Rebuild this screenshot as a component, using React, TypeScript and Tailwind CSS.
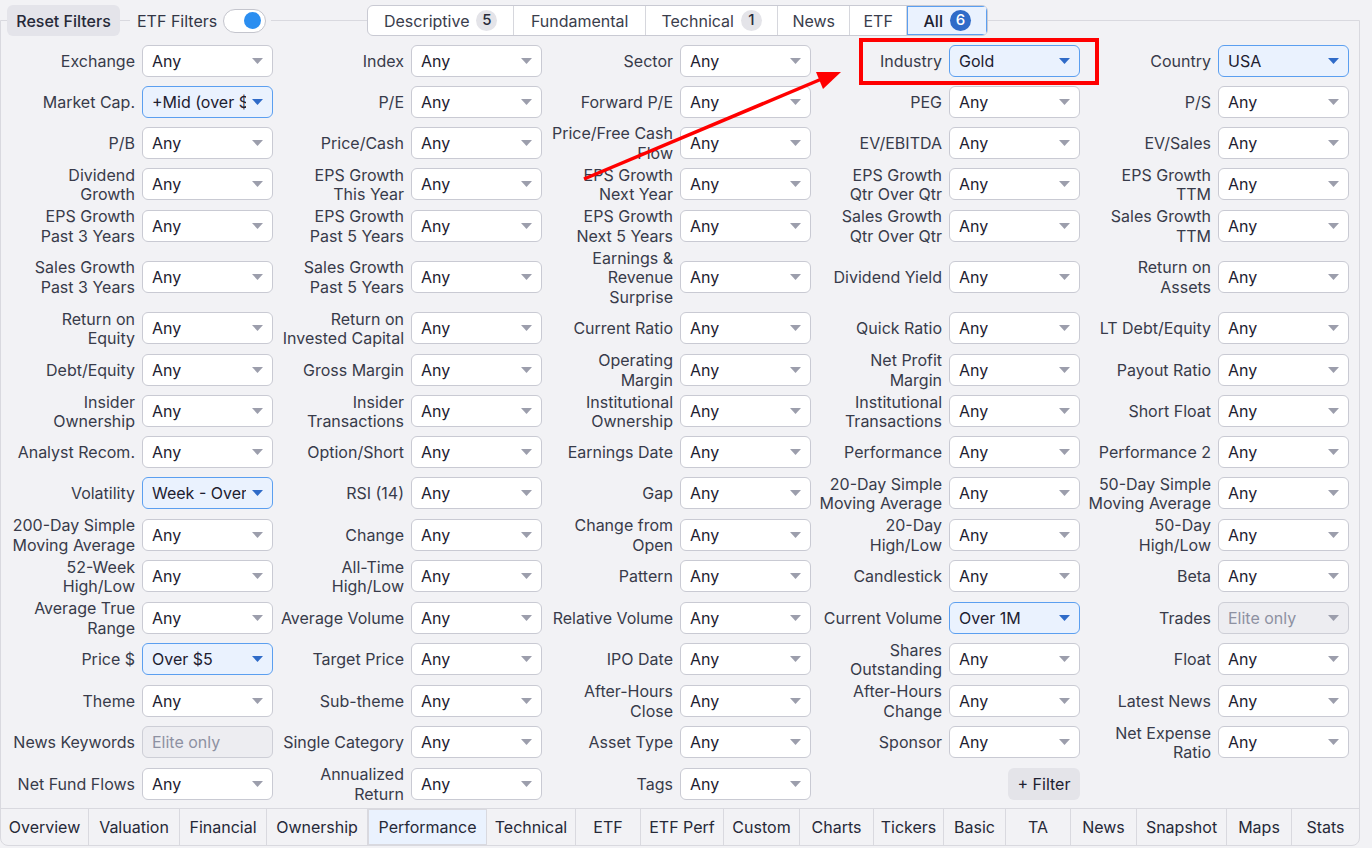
import type { ReactNode } from "react";

type Tone = "default" | "active" | "locked" | "input";

type Filter = {
  label: string[];
  value?: string;
  tone?: Tone;
  addButton?: boolean;
};

const f = (label: string, value = "Any", tone: Tone = "default"): Filter => ({
  label: label.split("|"),
  value,
  tone,
});

const rows: Filter[][] = [
  [f("Exchange"), f("Index"), f("Sector"), f("Industry", "Gold", "active"), f("Country", "USA", "active")],
  [f("Market Cap.", "+Mid (over $2bln)", "active"), f("P/E"), f("Forward P/E"), f("PEG"), f("P/S")],
  [f("P/B"), f("Price/Cash"), f("Price/Free Cash|Flow"), f("EV/EBITDA"), f("EV/Sales")],
  [f("Dividend|Growth"), f("EPS Growth|This Year"), f("EPS Growth|Next Year"), f("EPS Growth|Qtr Over Qtr"), f("EPS Growth|TTM")],
  [f("EPS Growth|Past 3 Years"), f("EPS Growth|Past 5 Years"), f("EPS Growth|Next 5 Years"), f("Sales Growth|Qtr Over Qtr"), f("Sales Growth|TTM")],
  [f("Sales Growth|Past 3 Years"), f("Sales Growth|Past 5 Years"), f("Earnings &|Revenue|Surprise"), f("Dividend Yield"), f("Return on|Assets")],
  [f("Return on|Equity"), f("Return on|Invested Capital"), f("Current Ratio"), f("Quick Ratio"), f("LT Debt/Equity")],
  [f("Debt/Equity"), f("Gross Margin"), f("Operating|Margin"), f("Net Profit|Margin"), f("Payout Ratio")],
  [f("Insider|Ownership"), f("Insider|Transactions"), f("Institutional|Ownership"), f("Institutional|Transactions"), f("Short Float")],
  [f("Analyst Recom."), f("Option/Short"), f("Earnings Date"), f("Performance"), f("Performance 2")],
  [f("Volatility", "Week - Over 3%", "active"), f("RSI (14)"), f("Gap"), f("20-Day Simple|Moving Average"), f("50-Day Simple|Moving Average")],
  [f("200-Day Simple|Moving Average"), f("Change"), f("Change from|Open"), f("20-Day|High/Low"), f("50-Day|High/Low")],
  [f("52-Week|High/Low"), f("All-Time|High/Low"), f("Pattern"), f("Candlestick"), f("Beta")],
  [f("Average True|Range"), f("Average Volume"), f("Relative Volume"), f("Current Volume", "Over 1M", "active"), f("Trades", "Elite only", "locked")],
  [f("Price $", "Over $5", "active"), f("Target Price"), f("IPO Date"), f("Shares|Outstanding"), f("Float")],
  [f("Theme"), f("Sub-theme"), f("After-Hours|Close"), f("After-Hours|Change"), f("Latest News")],
  [f("News Keywords", "Elite only", "input"), f("Single Category"), f("Asset Type"), f("Sponsor"), f("Net Expense|Ratio")],
  [f("Net Fund Flows"), f("Annualized|Return"), f("Tags"), { label: [], addButton: true }, { label: [] }],
];

const groupTabs = [
  { label: "Descriptive", count: "5", width: "w-[146px]" },
  { label: "Fundamental", width: "w-[132px]" },
  { label: "Technical", count: "1", width: "w-[132px]" },
  { label: "News", width: "w-[72px]" },
  { label: "ETF", width: "w-[57px]" },
  { label: "All", count: "6", width: "w-[80px]", active: true },
];

const viewTabs = [
  { label: "Overview", width: "w-[88px]" },
  { label: "Valuation", width: "w-[91px]" },
  { label: "Financial", width: "w-[87px]" },
  { label: "Ownership", width: "w-[101px]" },
  { label: "Performance", width: "w-[119px]", active: true },
  { label: "Technical", width: "w-[89px]" },
  { label: "ETF", width: "w-[65px]" },
  { label: "ETF Perf", width: "w-[83px]" },
  { label: "Custom", width: "w-[76px]" },
  { label: "Charts", width: "w-[74px]" },
  { label: "Tickers", width: "w-[70px]" },
  { label: "Basic", width: "w-[62px]" },
  { label: "TA", width: "w-[65px]" },
  { label: "News", width: "w-[66px]" },
  { label: "Snapshot", width: "w-[90px]" },
  { label: "Maps", width: "w-[65px]" },
  { label: "Stats", width: "w-[67px]" },
];

function Caret({ blue }: { blue?: boolean }) {
  return (
    <svg width="11" height="6" viewBox="0 0 11 6" className="shrink-0">
      <path d="M0 0 H11 L5.5 6 Z" fill={blue ? "#2f6bc8" : "#9c9eac"} />
    </svg>
  );
}

function SelectBox({ value, tone = "default" }: { value: string; tone?: Tone }) {
  const toneClass = {
    default: "border-[#c9cad3] bg-white text-[#1d2030]",
    active: "border-[#5b9ff0] bg-[#eaf2fe] text-[#1d2030]",
    locked: "border-[#cdced6] bg-[#ededf1] text-[#8d91a2]",
    input: "border-[#cdced6] bg-[#ededf1] text-[#8d91a2]",
  }[tone];

  return (
    <div className={`flex h-[32px] w-[131px] shrink-0 items-center rounded-md border pl-[9px] pr-[9px] ${toneClass}`}>
      <span className="mr-[6px] flex-1 overflow-hidden whitespace-nowrap">{value}</span>
      {tone !== "input" ? <Caret blue={tone === "active"} /> : null}
    </div>
  );
}

function FilterCell({ filter }: { filter: Filter }) {
  if (filter.addButton) {
    return (
      <div className="flex items-center justify-end">
        <button className="h-[32px] w-[72px] rounded-md bg-[#e4e4e9] text-[#1d2030]">+ Filter</button>
      </div>
    );
  }
  if (!filter.value) return <div />;

  return (
    <div className="flex min-h-[38px] items-center justify-end gap-[7px]">
      <div className="translate-y-px text-right leading-[19.5px] text-[#383b4a]">
        {filter.label.map((line) => (
          <div key={line} className="whitespace-nowrap">
            {line}
          </div>
        ))}
      </div>
      <SelectBox value={filter.value} tone={filter.tone} />
    </div>
  );
}

function Badge({ children, active }: { children: ReactNode; active?: boolean }) {
  return (
    <span
      className={`ml-[7px] inline-flex h-[21px] min-w-[21px] items-center justify-center rounded-full text-[15px] font-medium ${
        active ? "bg-[#2f6bc8] text-white" : "bg-[#e4e4e9] text-[#2a2d3b]"
      }`}
    >
      {children}
    </span>
  );
}

function Header() {
  return (
    <div className="-mt-[16px] flex h-[31px] items-center">
      <button className="ml-[6px] h-[31px] w-[113px] rounded-md bg-[#e4e4ea] font-medium text-[#262938]">Reset Filters</button>
      <div className="ml-[10px] flex h-[31px] items-center bg-[#f2f2f5] pl-[7px] pr-[5px]">
        <span className="text-[#333646]">ETF Filters</span>
        <span className="ml-[6px] flex h-[24px] w-[43px] items-center justify-end rounded-full border border-[#c4c5cd] bg-white pr-[4px]">
          <span className="h-[17px] w-[17px] rounded-full bg-[#2b8ef0]" />
        </span>
      </div>
      <div className="ml-[96px] flex h-[31px] overflow-hidden rounded-md border border-[#c9cad3] bg-white">
        {groupTabs.map((tab) => (
          <div
            key={tab.label}
            className={`flex items-center justify-center border-r border-[#d6d7dd] last:border-r-0 ${tab.width} ${
              tab.active ? "bg-[#eaf2fe] text-[#1d2030] outline outline-1 -outline-offset-1 outline-[#5b9ff0]" : "text-[#3a3d4c]"
            }`}
          >
            <span className={tab.active ? "font-medium" : ""}>{tab.label}</span>
            {tab.count ? <Badge active={tab.active}>{tab.count}</Badge> : null}
          </div>
        ))}
      </div>
    </div>
  );
}

function Annotation() {
  return (
    <>
      <div className="pointer-events-none absolute left-[859px] top-[38px] h-[47px] w-[240px] border-[4.5px] border-[#ff0000]" />
      <svg className="pointer-events-none absolute left-0 top-0" width="1372" height="848">
        <line x1="584" y1="179" x2="824" y2="78" stroke="#ff0000" strokeWidth="3.5" />
        <polygon points="841,72 823,89 816,72" fill="#ff0000" />
      </svg>
    </>
  );
}

export default function App() {
  return (
    <div
      className="relative h-[848px] w-[1372px] overflow-hidden bg-[#f2f2f5] pt-[20px] text-[16px] text-[#1d2030]"
      style={{ fontFamily: "Inter, 'Noto Sans', sans-serif" }}
    >
      <div className="w-[1360px] rounded-b-lg border border-[#d9d9df]">
        <Header />
        <div className="mt-[6px] grid grid-cols-[repeat(5,269px)] gap-y-[2.5px] pl-[3px]">
          {rows.map((row, r) => row.map((filter, c) => <FilterCell key={`${r}-${c}`} filter={filter} />))}
        </div>
        <div className="mt-[5px] flex h-[37px] border-t border-[#d9d9df]">
          {viewTabs.map((tab) => (
            <div
              key={tab.label}
              className={`flex items-center justify-center border-r border-[#d9d9df] last:border-r-0 ${tab.width} ${
                tab.active ? "border border-[#4a8fe0] bg-[#eaf2fe]" : ""
              }`}
            >
              <span className="whitespace-nowrap text-[#262938]">{tab.label}</span>
            </div>
          ))}
        </div>
      </div>
      <Annotation />
    </div>
  );
}
